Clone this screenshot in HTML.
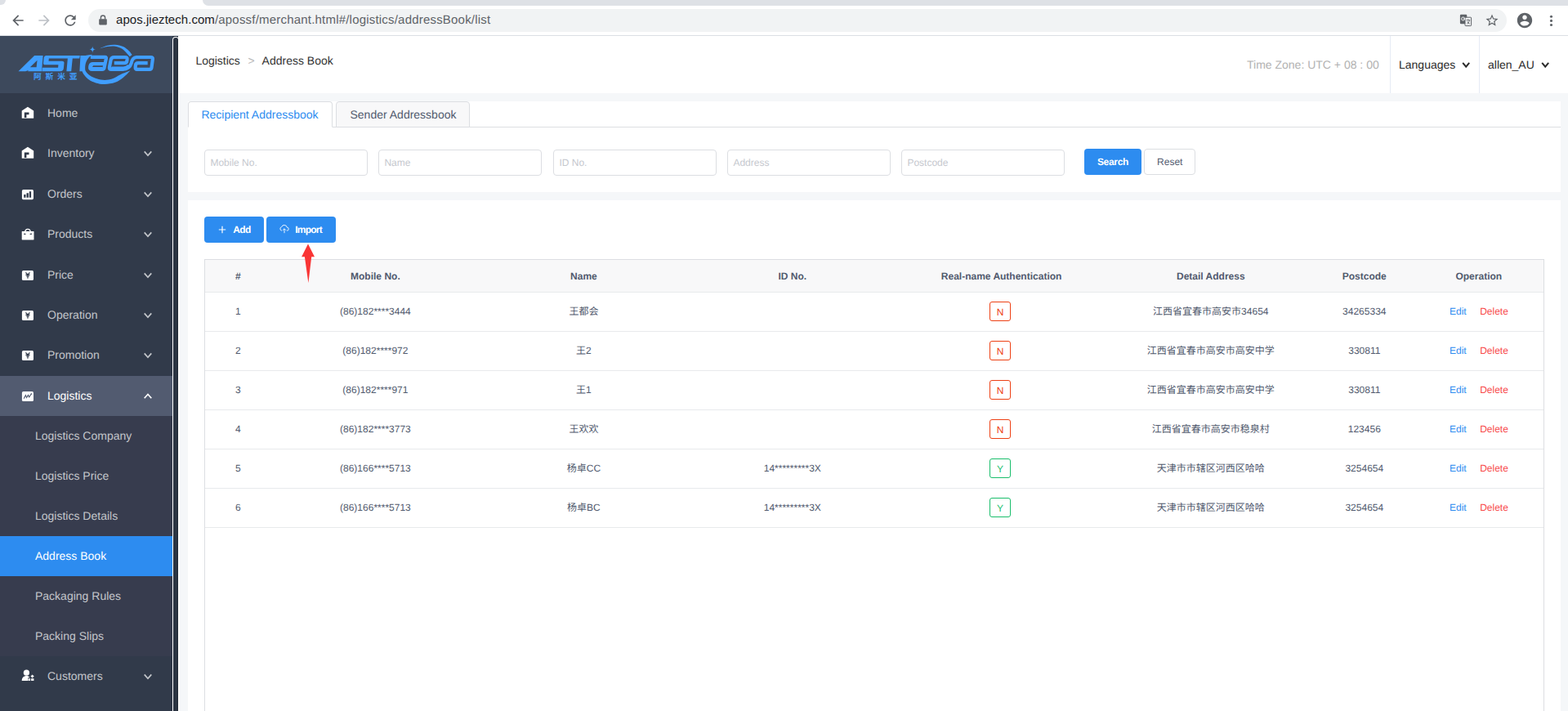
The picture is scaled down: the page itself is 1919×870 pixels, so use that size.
<!DOCTYPE html>
<html lang="en"><head><meta charset="utf-8"><title>Address Book</title>
<style>
html,body{margin:0;padding:0;}
body{text-rendering:geometricPrecision;width:1919px;height:870px;overflow:hidden;background:#fff;font-family:"Liberation Sans","Noto Sans CJK SC",sans-serif;}
#root{position:relative;width:1919px;height:870px;overflow:hidden;background:#f5f7f9;}
.b{position:absolute;box-sizing:border-box;}
.t{position:absolute;white-space:nowrap;line-height:20px;height:20px;}
svg{display:block;}
svg.cj{display:inline-block;}
.ab{position:absolute;}

</style></head>
<body>
<div id="root">
<div class="b" style="left:0px;top:0px;width:1919px;height:44px;background:#fff;"></div>
<div class="b" style="left:248px;top:0px;width:1671px;height:7px;background:#dee1e6;border-bottom-left-radius:7px;"></div>
<div class="b" style="left:0px;top:0px;width:7px;height:6px;background:#dee1e6;border-bottom-right-radius:7px;"></div>
<div class="b" style="left:0px;top:43px;width:1919px;height:1px;background:#dcdfe4;"></div>
<div class="b" style="left:108px;top:11px;width:1736px;height:28px;background:#f1f3f4;border-radius:14px;"></div>
<svg class="ab" style="left:12px;top:15px" width="20" height="20" viewBox="0 0 24 24"><path fill="#5f6368" d="M20 11H7.83l5.59-5.59L12 4l-8 8 8 8 1.41-1.410L7.83 13H20v-2z"/></svg>
<svg class="ab" style="left:44px;top:15px" width="20" height="20" viewBox="0 0 24 24"><path fill="#bdc1c6" d="M4 11h12.170l-5.59-5.59L12 4l8 8-8 8-1.41-1.410L16.170 13H4v-2z"/></svg>
<svg class="ab" style="left:76px;top:15px" width="20" height="20" viewBox="0 0 24 24"><path fill="#5f6368" d="M17.65 6.350A7.958 7.958 0 0 0 12 4c-4.420 0-7.990 3.580-7.990 8s3.570 8 7.990 8c3.730 0 6.840-2.550 7.730-6h-2.080A5.990 5.990 0 0 1 12 18c-3.310 0-6-2.690-6-6s2.690-6 6-6c1.660 0 3.140.69 4.220 1.780L13 11h7V4l-2.350 2.350z"/></svg>
<svg class="ab" style="left:121px;top:18px" width="10" height="13" viewBox="0 0 10 13"><path fill="#5f6368" d="M1 5.200h8a.8.800 0 0 1 .8.800v5.600a.8.800 0 0 1-.8.800H1a.8.800 0 0 1-.8-.8V6a.8.800 0 0 1 .8-.8z"/><path fill="none" stroke="#5f6368" stroke-width="1.400" d="M2.400 5.600V3.600a2.600 2.600 0 0 1 5.200 0v2"/></svg>
<div class="t" style="top:15px;font-size:15px;color:#202124;left:142px;"><span style="color:#202124;letter-spacing:0.05px">apos.jieztech.com</span><span style="color:#5f6368;letter-spacing:0.2px">/apossf/merchant.html#/logistics/addressBook/list</span></div>
<svg class="ab" style="left:1786px;top:17px" width="16" height="16" viewBox="0 0 16 16"><rect x="0.900" y="0.800" width="8.400" height="11.400" rx="1.200" fill="#5f6368"/><rect x="7" y="4.2" width="7.6" height="10.4" rx="0.8" fill="#f1f3f4" stroke="#5f6368" stroke-width="1"/><circle cx="4.6" cy="6" r="2" fill="none" stroke="#f1f3f4" stroke-width="1"/><path d="M4.600 6h2.200" stroke="#f1f3f4" stroke-width="1"/><path d="M8.600 7.600h4.600M10.900 6.600v1M9.400 12.400c1.600-1 2.600-2.600 3-4.600M9.800 9.200c.6 1.400 1.600 2.400 3 3.200" fill="none" stroke="#5f6368" stroke-width="0.9"/></svg>
<svg class="ab" style="left:1817px;top:16px" width="18" height="18" viewBox="0 0 24 24"><path fill="#5f6368" d="M22 9.240l-7.190-.62L12 2 9.190 8.630 2 9.240l5.460 4.730L5.820 21 12 17.270 18.180 21l-1.630-7.030L22 9.240zM12 15.400l-3.760 2.270 1-4.280-3.320-2.880 4.380-.38L12 6.100l1.710 4.040 4.380.38-3.320 2.880 1 4.280L12 15.400z"/></svg>
<svg class="ab" style="left:1855px;top:14px" width="22" height="22" viewBox="0 0 24 24"><path fill="#5f6368" d="M12 2C6.480 2 2 6.480 2 12s4.480 10 10 10 10-4.480 10-10S17.520 2 12 2zm0 3c1.660 0 3 1.340 3 3s-1.340 3-3 3-3-1.340-3-3 1.340-3 3-3zm0 14.200a7.200 7.200 0 0 1-6-3.220c.03-1.990 4-3.080 6-3.080 1.990 0 5.970 1.090 6 3.080a7.200 7.200 0 0 1-6 3.220z"/></svg>
<svg class="ab" style="left:1894px;top:16px" width="9" height="18" viewBox="0 0 9 18"><circle cx="4.5" cy="4.3" r="1.55" fill="#5f6368"/><circle cx="4.5" cy="9.4" r="1.55" fill="#5f6368"/><circle cx="4.5" cy="14.5" r="1.55" fill="#5f6368"/></svg>
<div class="b" style="left:0px;top:44px;width:211px;height:826px;background:#313a4a;"></div>
<div class="b" style="left:0px;top:44px;width:211px;height:70px;background:#3d495c;"></div>
<div class="b" style="left:211px;top:44px;width:8px;height:5px;background:#2a3442;"></div>
<div class="b" style="left:211px;top:44.5px;width:7.5px;height:830px;background:#fff;border-radius:3.700px 3.700px 0 0;"></div>
<div class="b" style="left:212.2px;top:45.5px;width:5.8px;height:830px;background:#2c3543;border-radius:2.900px 2.900px 0 0;border-right:1px solid #1f2835;"></div>
<div class="b" style="left:218px;top:44px;width:2px;height:826px;background:#fff;"></div>
<div class="b" style="left:0px;top:460px;width:211px;height:49px;background:#525b70;"></div>
<div class="b" style="left:0px;top:509px;width:211px;height:294px;background:#373c4e;"></div>
<div class="b" style="left:0px;top:656px;width:211px;height:49px;background:#2d8cf0;"></div>
<svg class="ab" style="left:0;top:0" width="211" height="114" viewBox="0 0 211 114" fill="#409eff"><path fill-rule="evenodd" d="M22.500 87.190 L42.130 68.020 L52.620 68.020 L51.010 87.190 L34.090 87.190 L34.860 85.910 L31.190 87.190 Z M36.790 82.180 L45.540 73.680 L44.640 82.180 Z"/><path d="M56.290 68.020 L97.790 68.020 L97.280 71.560 L88.790 71.560 L87.180 87.190 L81.380 87.190 L82.860 71.560 L59.830 71.560 L59.510 74.770 L75.920 74.770 Q78.810 74.770 78.490 77.350 L77.850 83.780 Q77.520 87.190 73.660 87.190 L51.330 87.190 L51.780 82.820 L71.090 82.820 L71.410 79.280 L55.320 79.280 Q52.750 79.280 53.070 76.710 L53.780 70.590 Q54.040 68.020 56.290 68.020 Z"/><path d="M98.450 68.020 L104.370 68.020 Q108.870 67.250 113.050 66.860 C112.270 67.500 109.590 69.330 108.360 70.720 C107.120 72.110 106.300 73.800 105.650 75.230 C105.010 76.650 104.740 77.910 104.490 79.280 C104.250 80.650 104.090 82.120 104.170 83.460 C104.260 84.800 104.070 85.880 105.010 87.320 C105.950 88.770 107.580 90.650 109.840 92.150 C112.090 93.650 115.470 95.370 118.520 96.330 C121.580 97.300 124.960 97.940 128.180 97.940 C131.390 97.940 134.610 97.460 137.830 96.330 C141.050 95.210 143.890 92.810 147.480 91.180 C151.070 89.550 157.400 87.320 159.380 86.550 C157.940 87.970 153.750 92.660 150.700 95.050 C147.640 97.430 144.800 99.500 141.050 100.840 C137.290 102.180 132.140 102.980 128.180 103.090 C124.210 103.200 120.450 102.390 117.240 101.480 C114.020 100.570 111.230 99.230 108.870 97.620 C106.510 96.010 104.470 93.560 103.080 91.830 C101.680 90.090 100.930 87.970 100.500 87.190 L97.420 87.190 Z"/><path d="M121.420 59.650 C123.080 59.010 128.120 56.600 131.390 55.790 C134.660 54.990 137.830 54.610 141.050 54.830 C144.260 55.040 147.910 55.850 150.700 57.080 C153.490 58.310 155.950 60.560 157.780 62.230 C159.600 63.890 160.990 66.250 161.640 67.050 L158.740 69.310 C157.940 68.390 155.470 65.440 153.920 63.840 C152.360 62.230 151.560 60.830 149.410 59.650 C147.270 58.470 144.050 57.190 141.050 56.760 C138.040 56.330 134.660 56.600 131.390 57.080 C128.120 57.560 123.080 59.220 121.420 59.650 Z"/><path d="M113.200 56.700 Q113.470 60.330 117.100 60.600 Q113.470 60.870 113.200 64.500 Q112.930 60.870 109.300 60.600 Q112.930 60.330 113.200 56.700 Z"/><path d="M110.800 69.900 L128.600 69.900 Q130.200 69.900 129.900 71.600 L127.500 83.100 Q127.200 84.800 125 84.800 L112.600 84.800 Q109.900 84.800 110.200 82.400 L110.400 80.900 Q110.900 78.200 114 78.200 L126.800 78.200" fill="none" stroke="#409eff" stroke-width="4.2" stroke-linejoin="round"/><path d="M125.600 84 L113.200 84 Q110.900 84 111 82.400 L111.200 80.900 Q111.500 78.600 114 78.600" fill="none" stroke="#409eff" stroke-width="4.2" stroke-linejoin="round"/><path d="M134.800 81.800 Q134.500 83.700 136.600 83.700 L151 83.700 Q155.500 83.400 157.900 80.400" fill="none" stroke="#409eff" stroke-width="4.2" stroke-linejoin="round"/><path d="M139.800 77.100 L152.300 77.100 Q155.100 77.100 155.400 74.200 L155.600 72.400 Q155.800 70 153.200 70 L139.800 70 Q136.200 70 135.600 73.500 L133.900 82.400 Q133.500 84.900 136 84.900 L150.300 84.900 Q158.600 84.600 160.700 77.200 Q162 70.300 167 70 L184.800 70 Q187.200 70 186.900 72.300 L185.500 82.700 Q185.200 84.900 183.100 84.900 L167.600 84.900 Q165.500 84.900 165.700 82.300 L165.900 79.900 Q166.200 77.200 169 77.200 L180.700 77.200" fill="none" stroke="#409eff" stroke-width="4.2" stroke-linejoin="round"/></svg>
<div class="ab" style="left:41px;top:89.400px;line-height:11px;height:11px;white-space:nowrap;font-size:9.7px;font-weight:bold;color:#409eff;letter-spacing:4.88px;font-family:'Liberation Sans','Noto Sans CJK SC',sans-serif;">阿斯米亚</div>
<div class="t" style="top:128px;font-size:14px;color:#c3c6cb;left:58px;">Home</div>
<div class="t" style="top:177px;font-size:14px;color:#c3c6cb;left:58px;">Inventory</div>
<div class="t" style="top:227px;font-size:14px;color:#c3c6cb;left:58px;">Orders</div>
<div class="t" style="top:276px;font-size:14px;color:#c3c6cb;left:58px;">Products</div>
<div class="t" style="top:326px;font-size:14px;color:#c3c6cb;left:58px;">Price</div>
<div class="t" style="top:375px;font-size:14px;color:#c3c6cb;left:58px;">Operation</div>
<div class="t" style="top:424px;font-size:14px;color:#c3c6cb;left:58px;">Promotion</div>
<div class="t" style="top:474px;font-size:14px;color:#fff;left:58px;">Logistics</div>
<div class="t" style="top:817px;font-size:14px;color:#c3c6cb;left:58px;">Customers</div>
<div class="t" style="top:523px;font-size:14px;color:#c3c6cb;left:43px;">Logistics Company</div>
<div class="t" style="top:572px;font-size:14px;color:#c3c6cb;left:43px;">Logistics Price</div>
<div class="t" style="top:621px;font-size:14px;color:#c3c6cb;left:43px;">Logistics Details</div>
<div class="t" style="top:670px;font-size:14px;color:#fff;left:43px;">Address Book</div>
<div class="t" style="top:719px;font-size:14px;color:#c3c6cb;left:43px;">Packaging Rules</div>
<div class="t" style="top:768px;font-size:14px;color:#c3c6cb;left:43px;">Packing Slips</div>
<div class="b" style="left:220px;top:44px;width:1699px;height:70px;background:#fff;"></div>
<div class="b" style="left:218px;top:44px;width:2px;height:70px;background:#fff;"></div>
<div class="t" style="top:64px;font-size:14px;color:#333;left:239.4px;">Logistics</div>
<div class="t" style="top:64px;font-size:14px;color:#b4b4b4;left:303.5px;">&gt;</div>
<div class="t" style="top:64px;font-size:14px;color:#333;left:320.6px;">Address Book</div>
<div class="t" style="top:69px;font-size:14px;color:#b2b2b2;left:1526px;">Time Zone: UTC + 08 : 00</div>
<div class="b" style="left:1701px;top:44px;width:1px;height:70px;background:#e6ebf5;"></div>
<div class="b" style="left:1810px;top:44px;width:1px;height:70px;background:#e6ebf5;"></div>
<div class="t" style="top:69px;font-size:14px;color:#2b2b2b;left:1712px;">Languages</div>
<div class="t" style="top:69px;font-size:14px;color:#2b2b2b;left:1821px;">allen_AU</div>
<div class="b" style="left:230px;top:124px;width:1680px;height:111px;background:#fff;"></div>
<div class="b" style="left:230px;top:155px;width:1680px;height:1px;background:#dcdee2;"></div>
<div class="b" style="left:230px;top:124px;width:177px;height:32px;background:#fff;border:1px solid #dcdee2;border-bottom:1px solid #fff;border-radius:4px 4px 0 0;"></div>
<div class="t" style="top:130px;font-size:14px;color:#2d8cf0;left:246.4px;">Recipient Addressbook</div>
<div class="b" style="left:411px;top:124px;width:164px;height:32px;background:#f8f8f9;border:1px solid #dcdee2;border-radius:4px 4px 0 0;"></div>
<div class="t" style="top:130px;font-size:14px;color:#515a6e;left:428.5px;">Sender Addressbook</div>
<div class="b" style="left:250px;top:183px;width:200px;height:32px;background:#fff;border:1px solid #dcdee2;border-radius:4px;"></div>
<div class="t" style="top:189px;font-size:12px;color:#c5c8ce;left:257.4px;">Mobile No.</div>
<div class="b" style="left:463px;top:183px;width:200px;height:32px;background:#fff;border:1px solid #dcdee2;border-radius:4px;"></div>
<div class="t" style="top:189px;font-size:12px;color:#c5c8ce;left:470.4px;">Name</div>
<div class="b" style="left:677px;top:183px;width:200px;height:32px;background:#fff;border:1px solid #dcdee2;border-radius:4px;"></div>
<div class="t" style="top:189px;font-size:12px;color:#c5c8ce;left:684.4px;">ID No.</div>
<div class="b" style="left:890px;top:183px;width:200px;height:32px;background:#fff;border:1px solid #dcdee2;border-radius:4px;"></div>
<div class="t" style="top:189px;font-size:12px;color:#c5c8ce;left:897.4px;">Address</div>
<div class="b" style="left:1103px;top:183px;width:200px;height:32px;background:#fff;border:1px solid #dcdee2;border-radius:4px;"></div>
<div class="t" style="top:189px;font-size:12px;color:#c5c8ce;left:1110.4px;">Postcode</div>
<div class="b" style="left:1327px;top:182px;width:70px;height:32px;background:#2d8cf0;border-radius:4px;"></div>
<div class="t" style="top:188px;font-size:12px;color:#fff;font-weight:bold;letter-spacing:-0.3px;left:1162px;width:400px;text-align:center;">Search</div>
<div class="b" style="left:1400px;top:182px;width:63px;height:32px;background:#fff;border:1px solid #dcdee2;border-radius:4px;"></div>
<div class="t" style="top:188px;font-size:12px;color:#515a6e;left:1231.8px;width:400px;text-align:center;">Reset</div>
<div class="b" style="left:230px;top:245px;width:1680px;height:640px;background:#fff;"></div>
<div class="b" style="left:250px;top:265px;width:73px;height:32px;background:#2d8cf0;border-radius:4px;"></div>
<svg class="ab" style="left:267px;top:276px" width="10" height="10" viewBox="0 0 10 10"><path d="M5 0.800v8.400M0.800 5h8.400" stroke="#fff" stroke-width="1.200" fill="none"/></svg>
<div class="t" style="top:271px;font-size:12px;color:#fff;font-weight:bold;letter-spacing:-0.6px;left:285.2px;">Add</div>
<div class="b" style="left:326px;top:265px;width:85px;height:32px;background:#2d8cf0;border-radius:4px;"></div>
<svg class="ab" style="left:342px;top:275px" width="12" height="11" viewBox="0 0 12 11"><path d="M3.200 7.200H2.900A2.300 2.300 0 0 1 2.600 2.700 3.500 3.500 0 0 1 9.300 3.200 2 2 0 0 1 9.200 7.200H8.800" fill="none" stroke="#fff" stroke-width="0.9"/><path d="M6 10.200V5M4.200 6.600L6 4.800 7.800 6.600" fill="none" stroke="#fff" stroke-width="0.9"/></svg>
<div class="t" style="top:271px;font-size:12px;color:#fff;font-weight:bold;letter-spacing:-0.8px;left:361.3px;">Import</div>
<div class="b" style="left:250px;top:317px;width:1640px;height:560px;border:1px solid #dcdee2;border-bottom:none;background:#fff;"></div>
<div class="b" style="left:251px;top:318px;width:1638px;height:39px;background:#f8f8f9;"></div>
<div class="b" style="left:251px;top:357px;width:1638px;height:1px;background:#e8eaec;"></div>
<div class="b" style="left:251px;top:405px;width:1638px;height:1px;background:#e8eaec;"></div>
<div class="b" style="left:251px;top:453px;width:1638px;height:1px;background:#e8eaec;"></div>
<div class="b" style="left:251px;top:501px;width:1638px;height:1px;background:#e8eaec;"></div>
<div class="b" style="left:251px;top:549px;width:1638px;height:1px;background:#e8eaec;"></div>
<div class="b" style="left:251px;top:597px;width:1638px;height:1px;background:#e8eaec;"></div>
<div class="b" style="left:251px;top:645px;width:1638px;height:1px;background:#e8eaec;"></div>
<div class="t" style="top:328px;font-size:12px;color:#515a6e;font-weight:bold;left:91.4px;width:400px;text-align:center;">#</div>
<div class="t" style="top:328px;font-size:12px;color:#515a6e;font-weight:bold;left:259.4px;width:400px;text-align:center;">Mobile No.</div>
<div class="t" style="top:328px;font-size:12px;color:#515a6e;font-weight:bold;left:514.4px;width:400px;text-align:center;">Name</div>
<div class="t" style="top:328px;font-size:12px;color:#515a6e;font-weight:bold;left:769.8px;width:400px;text-align:center;">ID No.</div>
<div class="t" style="top:328px;font-size:12px;color:#515a6e;font-weight:bold;left:1025.6px;width:400px;text-align:center;">Real-name Authentication</div>
<div class="t" style="top:328px;font-size:12px;color:#515a6e;font-weight:bold;left:1281.8px;width:400px;text-align:center;">Detail Address</div>
<div class="t" style="top:328px;font-size:12px;color:#515a6e;font-weight:bold;left:1469.8px;width:400px;text-align:center;">Postcode</div>
<div class="t" style="top:328px;font-size:12px;color:#515a6e;font-weight:bold;left:1609.8px;width:400px;text-align:center;">Operation</div>
<div class="t" style="top:371px;font-size:12px;color:#515a6e;left:91.4px;width:400px;text-align:center;">1</div>
<div class="t" style="top:371px;font-size:12px;color:#515a6e;left:259.4px;width:400px;text-align:center;">(86)182****3444</div>
<div class="t" style="top:371px;font-size:12px;color:#515a6e;left:514.4px;width:400px;text-align:center;">王都会</div>
<div class="b" style="left:1211px;top:369px;width:26px;height:24px;border:1px solid #ed4014;border-radius:3px;background:#fff;"></div>
<div class="t" style="top:372px;font-size:12px;color:#ed4014;left:1024px;width:400px;text-align:center;">N</div>
<div class="t" style="top:371px;font-size:12px;color:#515a6e;left:1281.8px;width:400px;text-align:center;">江西省宜春市高安市34654</div>
<div class="t" style="top:371px;font-size:12px;color:#515a6e;left:1469.8px;width:400px;text-align:center;">34265334</div>
<div class="t" style="top:371px;font-size:12px;color:#2d8cf0;left:1774px;">Edit</div>
<div class="t" style="top:371px;font-size:12px;color:#f84a4a;left:1811.2px;">Delete</div>
<div class="t" style="top:419px;font-size:12px;color:#515a6e;left:91.4px;width:400px;text-align:center;">2</div>
<div class="t" style="top:419px;font-size:12px;color:#515a6e;left:259.4px;width:400px;text-align:center;">(86)182****972</div>
<div class="t" style="top:419px;font-size:12px;color:#515a6e;left:514.4px;width:400px;text-align:center;">王2</div>
<div class="b" style="left:1211px;top:417px;width:26px;height:24px;border:1px solid #ed4014;border-radius:3px;background:#fff;"></div>
<div class="t" style="top:420px;font-size:12px;color:#ed4014;left:1024px;width:400px;text-align:center;">N</div>
<div class="t" style="top:419px;font-size:12px;color:#515a6e;left:1281.8px;width:400px;text-align:center;">江西省宜春市高安市高安中学</div>
<div class="t" style="top:419px;font-size:12px;color:#515a6e;left:1469.8px;width:400px;text-align:center;">330811</div>
<div class="t" style="top:419px;font-size:12px;color:#2d8cf0;left:1774px;">Edit</div>
<div class="t" style="top:419px;font-size:12px;color:#f84a4a;left:1811.2px;">Delete</div>
<div class="t" style="top:467px;font-size:12px;color:#515a6e;left:91.4px;width:400px;text-align:center;">3</div>
<div class="t" style="top:467px;font-size:12px;color:#515a6e;left:259.4px;width:400px;text-align:center;">(86)182****971</div>
<div class="t" style="top:467px;font-size:12px;color:#515a6e;left:514.4px;width:400px;text-align:center;">王1</div>
<div class="b" style="left:1211px;top:465px;width:26px;height:24px;border:1px solid #ed4014;border-radius:3px;background:#fff;"></div>
<div class="t" style="top:468px;font-size:12px;color:#ed4014;left:1024px;width:400px;text-align:center;">N</div>
<div class="t" style="top:467px;font-size:12px;color:#515a6e;left:1281.8px;width:400px;text-align:center;">江西省宜春市高安市高安中学</div>
<div class="t" style="top:467px;font-size:12px;color:#515a6e;left:1469.8px;width:400px;text-align:center;">330811</div>
<div class="t" style="top:467px;font-size:12px;color:#2d8cf0;left:1774px;">Edit</div>
<div class="t" style="top:467px;font-size:12px;color:#f84a4a;left:1811.2px;">Delete</div>
<div class="t" style="top:515px;font-size:12px;color:#515a6e;left:91.4px;width:400px;text-align:center;">4</div>
<div class="t" style="top:515px;font-size:12px;color:#515a6e;left:259.4px;width:400px;text-align:center;">(86)182****3773</div>
<div class="t" style="top:515px;font-size:12px;color:#515a6e;left:514.4px;width:400px;text-align:center;">王欢欢</div>
<div class="b" style="left:1211px;top:513px;width:26px;height:24px;border:1px solid #ed4014;border-radius:3px;background:#fff;"></div>
<div class="t" style="top:516px;font-size:12px;color:#ed4014;left:1024px;width:400px;text-align:center;">N</div>
<div class="t" style="top:515px;font-size:12px;color:#515a6e;left:1281.8px;width:400px;text-align:center;">江西省宜春市高安市稳泉村</div>
<div class="t" style="top:515px;font-size:12px;color:#515a6e;left:1469.8px;width:400px;text-align:center;">123456</div>
<div class="t" style="top:515px;font-size:12px;color:#2d8cf0;left:1774px;">Edit</div>
<div class="t" style="top:515px;font-size:12px;color:#f84a4a;left:1811.2px;">Delete</div>
<div class="t" style="top:563px;font-size:12px;color:#515a6e;left:91.4px;width:400px;text-align:center;">5</div>
<div class="t" style="top:563px;font-size:12px;color:#515a6e;left:259.4px;width:400px;text-align:center;">(86)166****5713</div>
<div class="t" style="top:563px;font-size:12px;color:#515a6e;left:514.4px;width:400px;text-align:center;">杨卓CC</div>
<div class="t" style="top:563px;font-size:12px;color:#515a6e;left:769.8px;width:400px;text-align:center;">14*********3X</div>
<div class="b" style="left:1211px;top:561px;width:26px;height:24px;border:1px solid #19be6b;border-radius:3px;background:#fff;"></div>
<div class="t" style="top:564px;font-size:12px;color:#19be6b;left:1024px;width:400px;text-align:center;">Y</div>
<div class="t" style="top:563px;font-size:12px;color:#515a6e;left:1281.8px;width:400px;text-align:center;">天津市市辖区河西区哈哈</div>
<div class="t" style="top:563px;font-size:12px;color:#515a6e;left:1469.8px;width:400px;text-align:center;">3254654</div>
<div class="t" style="top:563px;font-size:12px;color:#2d8cf0;left:1774px;">Edit</div>
<div class="t" style="top:563px;font-size:12px;color:#f84a4a;left:1811.2px;">Delete</div>
<div class="t" style="top:611px;font-size:12px;color:#515a6e;left:91.4px;width:400px;text-align:center;">6</div>
<div class="t" style="top:611px;font-size:12px;color:#515a6e;left:259.4px;width:400px;text-align:center;">(86)166****5713</div>
<div class="t" style="top:611px;font-size:12px;color:#515a6e;left:514.4px;width:400px;text-align:center;">杨卓BC</div>
<div class="t" style="top:611px;font-size:12px;color:#515a6e;left:769.8px;width:400px;text-align:center;">14*********3X</div>
<div class="b" style="left:1211px;top:609px;width:26px;height:24px;border:1px solid #19be6b;border-radius:3px;background:#fff;"></div>
<div class="t" style="top:612px;font-size:12px;color:#19be6b;left:1024px;width:400px;text-align:center;">Y</div>
<div class="t" style="top:611px;font-size:12px;color:#515a6e;left:1281.8px;width:400px;text-align:center;">天津市市辖区河西区哈哈</div>
<div class="t" style="top:611px;font-size:12px;color:#515a6e;left:1469.8px;width:400px;text-align:center;">3254654</div>
<div class="t" style="top:611px;font-size:12px;color:#2d8cf0;left:1774px;">Edit</div>
<div class="t" style="top:611px;font-size:12px;color:#f84a4a;left:1811.2px;">Delete</div>
<svg class="ab" style="left:366px;top:296px" width="24" height="52" viewBox="0 0 24 52"><path fill="#f93535" d="M11 2.500L19 18.300 15.200 18.200 11.400 50.200 6.900 18.200 3.100 18.300z"/></svg>
<svg class="ab" style="left:0;top:0;pointer-events:none" width="1919" height="870" viewBox="0 0 1919 870"><g transform="translate(26.7 130.7)"><path fill="#fff" d="M7.250 0L14.500 4.800V13.600a.5.500 0 0 1-.5.500H.5a.5.500 0 0 1-.5-.5V4.800z"/><path fill="#313a4a" d="M3.100 6.700h5.700v2.800H5.700v3.800H3.100z"/></g><g transform="translate(26.7 179.7)"><path fill="#fff" d="M7.250 0L14.500 4.800V13.600a.5.500 0 0 1-.5.500H.5a.5.500 0 0 1-.5-.5V4.800z"/><path fill="#313a4a" d="M3.100 6.700h5.700v2.800H5.700v3.800H3.100z"/></g><path d="M176.70 185.40 L181.00 190.20 L185.30 185.40" fill="none" stroke="#c3c6cb" stroke-width="1.7"/><g transform="translate(26.9 232.1)"><rect x="0" y="0" width="14.100" height="12.100" rx="1.700" fill="#fff"/><path fill="#313a4a" d="M2.300 5.800h2.300v3.800H2.300zM5.600 4.200h2.400v5.400H5.600zM8.900 2.100h2.300v7.500H8.900z"/></g><path d="M176.70 235.40 L181.00 240.20 L185.30 235.40" fill="none" stroke="#c3c6cb" stroke-width="1.7"/><g transform="translate(26.7 280)"><path fill="#fff" d="M.4 2.900h14a.4.400 0 0 1 .4.400v9.700a.4.400 0 0 1-.4.400H.4a.4.400 0 0 1-.4-.4V3.300a.4.400 0 0 1 .4-.4z"/><path fill="#313a4a" d="M2.200 6.900l1.450-2.500 1.450 2.500zM9.600 6.900l1.450-2.500 1.450 2.500z"/><path fill="none" stroke="#fff" stroke-width="1.250" d="M3.800 5.700V4.600C3.800 2 5.300.400 7.250.400S10.700 2 10.700 4.600v1.100"/></g><path d="M176.70 284.40 L181.00 289.20 L185.30 284.40" fill="none" stroke="#c3c6cb" stroke-width="1.7"/><g transform="translate(26.9 331)"><rect x="0" y="0" width="14.100" height="12.100" rx="1.700" fill="#fff"/><path fill="none" stroke="#313a4a" stroke-width="1.200" d="M4.500 2.500L7.050 4.900 9.600 2.500M7.050 4.900v4.900M4.500 5.400h5.100"/><path fill="none" stroke="#313a4a" stroke-width="0.800" d="M5 7.100h4.100"/></g><path d="M176.70 334.40 L181.00 339.20 L185.30 334.40" fill="none" stroke="#c3c6cb" stroke-width="1.7"/><g transform="translate(26.9 380)"><rect x="0" y="0" width="14.100" height="12.100" rx="1.700" fill="#fff"/><path fill="none" stroke="#313a4a" stroke-width="1.200" d="M4.500 2.500L7.050 4.900 9.600 2.500M7.050 4.900v4.900M4.500 5.400h5.100"/><path fill="none" stroke="#313a4a" stroke-width="0.800" d="M5 7.100h4.100"/></g><path d="M176.70 383.40 L181.00 388.20 L185.30 383.40" fill="none" stroke="#c3c6cb" stroke-width="1.7"/><g transform="translate(26.9 429)"><rect x="0" y="0" width="14.100" height="12.100" rx="1.700" fill="#fff"/><path fill="none" stroke="#313a4a" stroke-width="1.200" d="M4.500 2.500L7.050 4.900 9.600 2.500M7.050 4.900v4.900M4.500 5.400h5.100"/><path fill="none" stroke="#313a4a" stroke-width="0.800" d="M5 7.100h4.100"/></g><path d="M176.70 432.40 L181.00 437.20 L185.30 432.40" fill="none" stroke="#c3c6cb" stroke-width="1.7"/><g transform="translate(26.9 479)"><rect x="0" y="0" width="14.100" height="12.100" rx="1.700" fill="#fff"/><path fill="none" stroke="#525b70" stroke-width="1.100" d="M2.250 8.800L4.500 4.650 5.700 7.600 7.600 4.500 8.800 6.900 11.600 2.700"/><path fill="#525b70" d="M10.300 2.900l1.800-.8-.2 2z"/></g><path d="M176.70 487.20 L181.00 482.40 L185.30 487.20" fill="none" stroke="#fff" stroke-width="1.7"/><g transform="translate(26.7 819.6)"><circle cx="5.700" cy="3.600" r="3.600" fill="#fff"/><path fill="#fff" d="M0 13.300C.2 9.600 2.500 7.500 5.700 7.500c1.700 0 3.100.6 4 1.700L7.300 10.200v3.100z"/><path fill="#fff" d="M12.900 5.800l2.100 2.100-2.100 2.100-2.100-2.100zM7.700 10.600h2.700v2.700H7.700zM11.400 10.600h3.300v2.700h-3.300z"/></g><path d="M176.70 825.40 L181.00 830.20 L185.30 825.40" fill="none" stroke="#c3c6cb" stroke-width="1.7"/><path d="M1790.20 76.85 L1794.20 81.75 L1798.20 76.85" fill="none" stroke="#2b2b2b" stroke-width="2"/><path d="M1887.20 76.85 L1891.20 81.75 L1895.20 76.850" fill="none" stroke="#2b2b2b" stroke-width="2"/></svg>
</div>
</body></html>
